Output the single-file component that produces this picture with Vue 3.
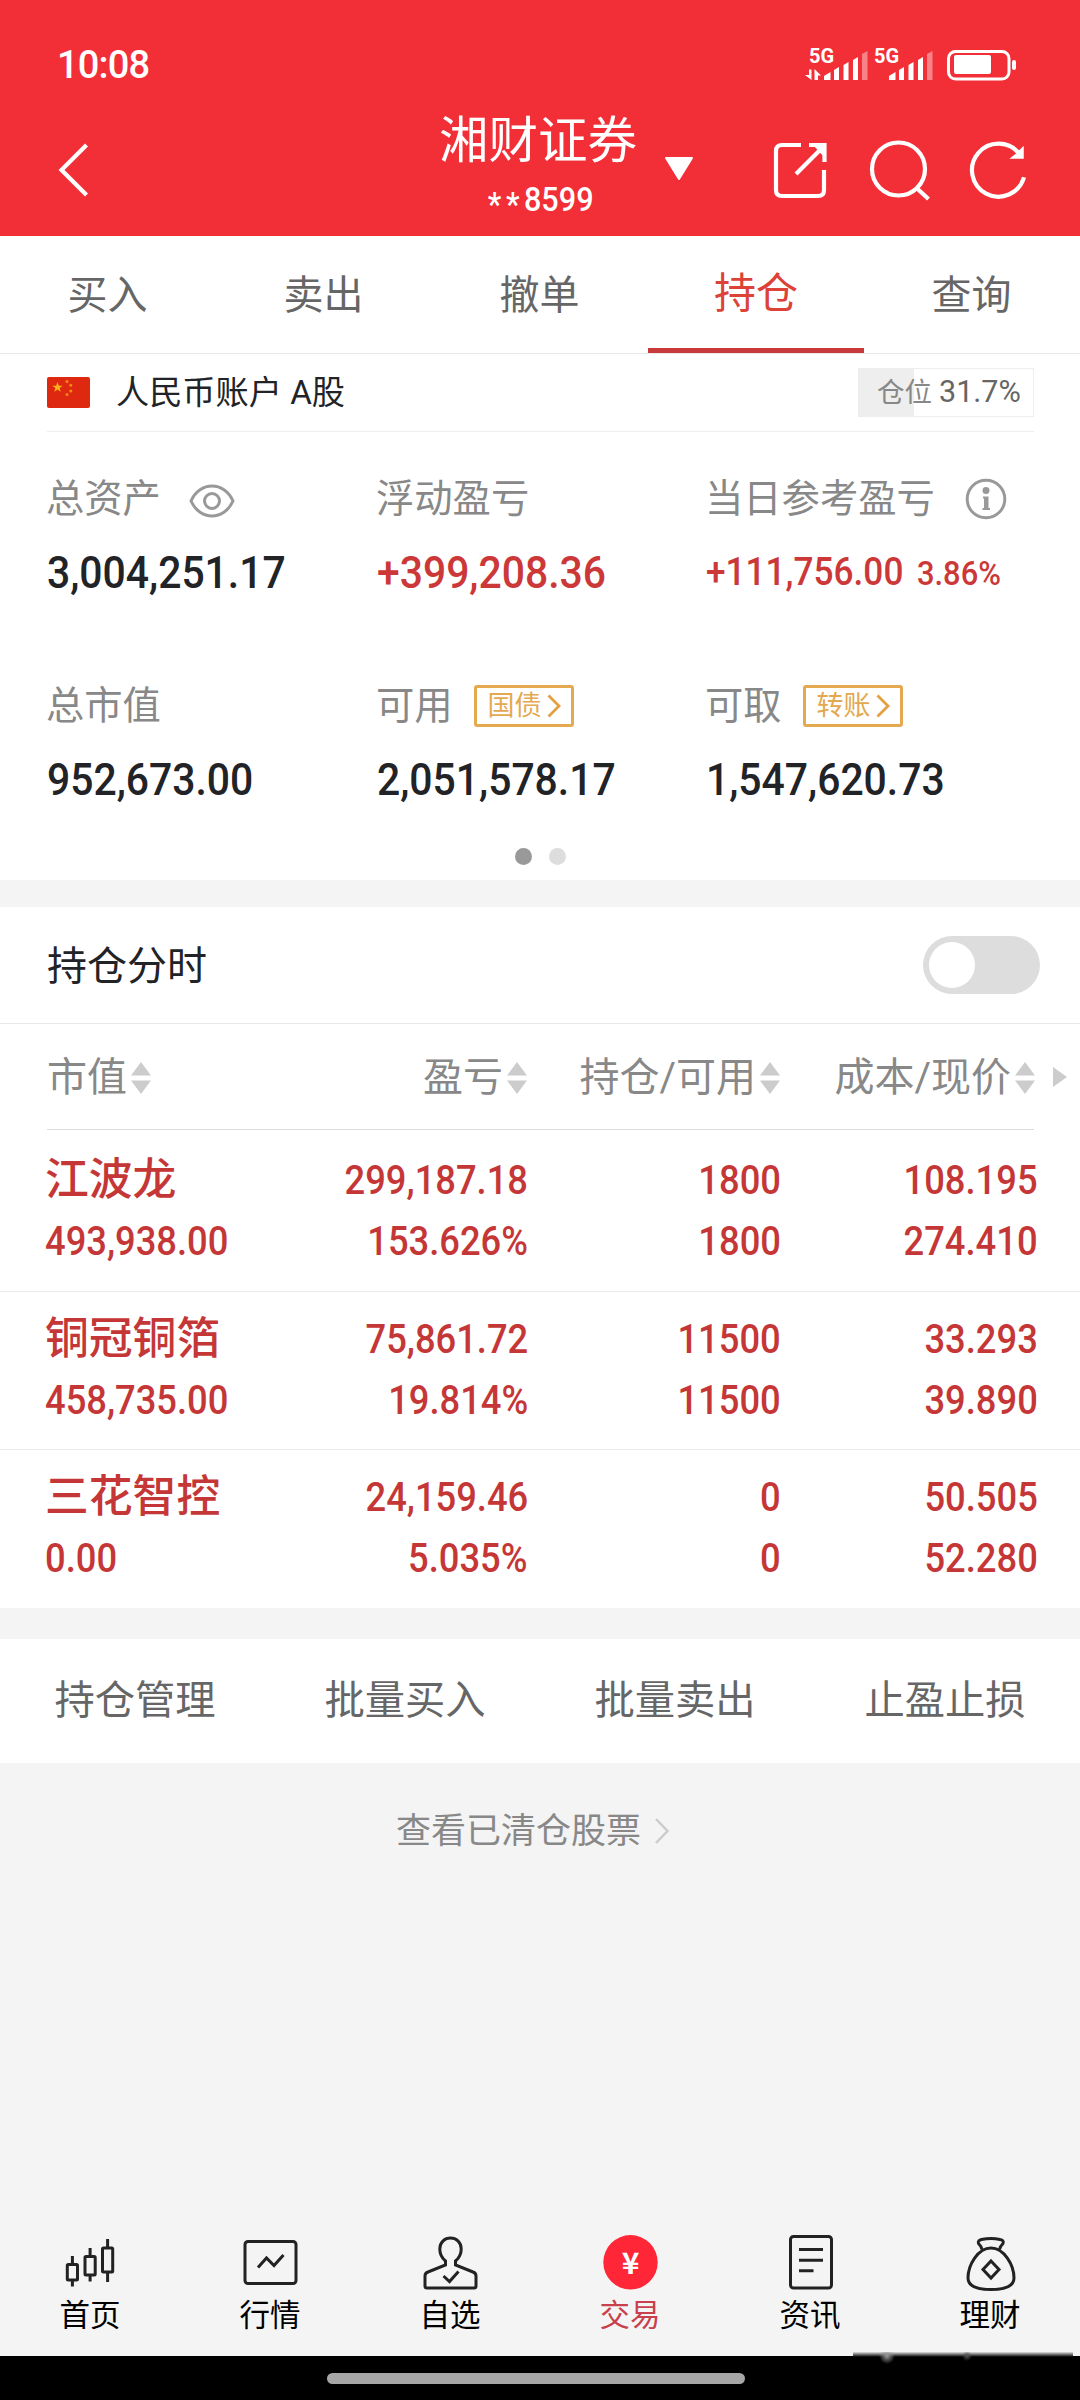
<script setup>
import { ref } from 'vue'

const tabs = ['买入', '卖出', '撤单', '持仓', '查询']
const activeTab = ref('持仓')

const position = 31.7

const stats = [
  { label: '总资产', value: '3,004,251.17', icon: 'eye' },
  { label: '浮动盈亏', value: '+399,208.36', up: true },
  { label: '当日参考盈亏', value: '+111,756.00', rate: '3.86%', up: true, icon: 'info' },
  { label: '总市值', value: '952,673.00' },
  { label: '可用', value: '2,051,578.17', action: '国债' },
  { label: '可取', value: '1,547,620.73', action: '转账' }
]

const columns = ['市值', '盈亏', '持仓/可用', '成本/现价']

const holdings = [
  { name: '江波龙', cells: [['493,938.00'], ['299,187.18', '153.626%'], ['1800', '1800'], ['108.195', '274.410']] },
  { name: '铜冠铜箔', cells: [['458,735.00'], ['75,861.72', '19.814%'], ['11500', '11500'], ['33.293', '39.890']] },
  { name: '三花智控', cells: [['0.00'], ['24,159.46', '5.035%'], ['0', '0'], ['50.505', '52.280']] }
]

const actions = ['持仓管理', '批量买入', '批量卖出', '止盈止损']

const navItems = [
  { key: 'home', label: '首页' },
  { key: 'quote', label: '行情' },
  { key: 'watch', label: '自选' },
  { key: 'trade', label: '交易' },
  { key: 'news', label: '资讯' },
  { key: 'wealth', label: '理财' }
]
const activeNav = ref('trade')
const showTimeline = ref(false)
</script>

<template>
  <div class="page">
    <!-- Header -->
    <header class="header">
      <div class="status">
        <span class="status__time">10:08</span>
        <svg class="status__icons" width="212" height="56" viewBox="804 36 212 56">
          <g fill="#fff">
            <text class="status__net" x="809" y="62">5G</text>
            <text class="status__net" x="874" y="62">5G</text>
            <path d="M811.500 79V68.500h-2.500V74h-4zM814.500 79V68l6.500 6.500h-3V79z" />
            <path d="M824 79v-4l6.500-4v8zM834 79V69l5-3v13zM843.500 79V64l5-3v18zM853 79V59l5-3v23z" />
            <path d="M889 79v-4l6.500-4v8zM899 79V69l5-3v13zM908.500 79V64l5-3v18zM918 79V59l5-3v23z" />
            <path d="M862 79V53l5.500-3v29zM927 79V53l5.500-3v29z" opacity="0.4" />
            <rect x="954" y="54" width="37" height="19" rx="2" />
            <rect x="1012" y="59" width="4" height="10" rx="2" />
          </g>
          <rect x="948.500" y="50.500" width="60.500" height="27.500" rx="7" fill="none" stroke="#fff" stroke-width="3" />
        </svg>
      </div>

      <div class="titlebar">
        <svg class="titlebar__back" width="34" height="56" viewBox="0 0 34 56">
          <path d="M29.500 3 4.500 28l25 25" />
        </svg>
        <div class="titlebar__account">
          <div class="titlebar__name">湘财证券</div>
          <div class="titlebar__no"><span class="titlebar__mask">**</span>8599</div>
        </div>
        <svg class="titlebar__caret" width="30" height="26" viewBox="0 0 30 26">
          <path d="M2 2h26L15 23z" fill="#fff" stroke="#fff" stroke-width="2" stroke-linejoin="round" />
        </svg>
        <div class="titlebar__tools">
          <svg width="60" height="60" viewBox="0 0 60 60">
            <path d="M30 5H11q-6 0-6 6v39q0 6 6 6h36q6 0 6-6V30" />
            <path d="M38 5h15.500v17M53 6 25 34" />
            <path d="M42 5h11v12z" fill="#fff" stroke="none" />
          </svg>
          <svg width="60" height="60" viewBox="0 0 60 60">
            <circle cx="28.500" cy="29" r="26.500" />
            <path d="m46.500 48 12 11" />
          </svg>
          <svg width="60" height="60" viewBox="0 0 60 60">
            <path d="M55 37.300A26.500 26.500 0 1 1 50.500 14" />
            <path d="M54 7.500V18H42.500l5-4z" fill="#fff" stroke-width="1.500" />
          </svg>
        </div>
      </div>
    </header>

    <!-- Tabs -->
    <nav class="tabs">
      <button
        v-for="tab in tabs"
        :key="tab"
        :class="['tabs__item', { 'tabs__item--active': tab === activeTab }]"
        @click="activeTab = tab"
      >
        {{ tab }}
      </button>
    </nav>

    <!-- Account -->
    <section class="account">
      <div class="account__bar">
        <svg width="43" height="31" viewBox="0 0 43 31">
          <rect width="43" height="31" rx="2" fill="#de2910" />
          <path d="m10.500 5 1.300 3.700h3.800l-3 2.300 1.100 3.700-3.200-2.200-3.200 2.200 1.100-3.700-3-2.300h3.800z" fill="#ffb31a" />
          <g fill="#f58a17">
            <circle cx="20" cy="4.500" r="1.500" />
            <circle cx="23.800" cy="8.300" r="1.500" />
            <circle cx="23.800" cy="14" r="1.500" />
            <circle cx="20" cy="17.500" r="1.500" />
          </g>
        </svg>
        <span class="account__name">人民币账户 A股</span>
        <span class="account__position">
          <i class="account__fill" :style="{ width: position + '%' }" />
          <span class="account__position-text">仓位</span>
          <span class="account__position-num">{{ position }}%</span>
        </span>
      </div>

      <div class="stats">
        <div v-for="item in stats" :key="item.label" class="stat">
          <div class="stat__label">
            {{ item.label }}
            <svg v-if="item.icon === 'eye'" class="stat__eye" width="46" height="34" viewBox="0 0 46 34">
              <path d="M2 17C11-3 35-3 44 17 35 37 11 37 2 17z" />
              <circle cx="23" cy="17" r="7.500" />
            </svg>
            <svg v-if="item.icon === 'info'" class="stat__info" width="42" height="42" viewBox="0 0 42 42">
              <circle cx="21" cy="21" r="18.800" />
              <circle cx="21" cy="12.500" r="3.500" class="stat__info-fill" />
              <path d="M18 18.500h5.500V30H25v2h-7.500v-2H19v-9.500h-1z" class="stat__info-fill" />
            </svg>
            <span v-if="item.action" class="stat__action">
              {{ item.action }}
              <svg width="14" height="24" viewBox="0 0 14 24"><path d="m1.500 1.500 10.500 10.500L1.500 22.500" /></svg>
            </span>
          </div>
          <div :class="['stat__value', { 'stat__value--up': item.up, 'stat__value--small': item.rate }]">
            <span class="num">{{ item.value }}</span>
            <span v-if="item.rate" class="num stat__rate">{{ item.rate }}</span>
          </div>
        </div>
      </div>

      <div class="dots">
        <i class="dots__dot dots__dot--active" />
        <i class="dots__dot" />
      </div>
    </section>

    <!-- Holdings -->
    <section class="holdings">
      <div class="holdings__switch">
        <span>持仓分时</span>
        <button :class="['switch', { 'switch--on': showTimeline }]" @click="showTimeline = !showTimeline">
          <i class="switch__knob" />
        </button>
      </div>

      <div class="holdings__head">
        <div v-for="col in columns" :key="col" class="holdings__col">
          {{ col }}
          <svg width="20" height="32" viewBox="0 0 20 32">
            <path d="M10 0l10 13.500H0zM10 32 0 18.500h20z" />
          </svg>
        </div>
        <svg class="holdings__more" width="14" height="20" viewBox="0 0 14 20">
          <path d="M0 0l14 10L0 20z" />
        </svg>
      </div>

      <div v-for="row in holdings" :key="row.name" class="row">
        <div v-for="(cell, i) in row.cells" :key="i" class="row__cell">
          <div v-if="i === 0" class="row__name">{{ row.name }}</div>
          <div v-for="(value, j) in cell" :key="j" class="row__line">
            <span class="num">{{ value }}</span>
          </div>
        </div>
      </div>
    </section>

    <div class="actions">
      <span v-for="action in actions" :key="action">{{ action }}</span>
    </div>

    <div class="cleared">
      查看已清仓股票
      <svg width="14" height="26" viewBox="0 0 14 26"><path d="m1 1 11.500 12L1 25" /></svg>
    </div>

    <!-- Bottom navigation -->
    <nav class="nav">
      <div
        v-for="item in navItems"
        :key="item.key"
        :class="['nav__item', { 'nav__item--active': item.key === activeNav }]"
        @click="activeNav = item.key"
      >
        <svg class="nav__icon" width="60" height="62" viewBox="0 0 60 62">
          <g v-if="item.key === 'home'">
            <rect x="7.300" y="34.500" width="10.200" height="15.500" rx="1" />
            <rect x="25" y="26.500" width="10.200" height="18.500" rx="1" />
            <rect x="42.500" y="18" width="10.200" height="24" rx="1" />
            <path d="M12.400 26v8.500M12.400 50v6.500M30.100 18v8.500M30.100 45v6.500M47.600 9v9M47.600 42v10" />
          </g>
          <g v-else-if="item.key === 'quote'">
            <rect x="5" y="11.500" width="51" height="42" rx="3" />
            <path d="m18 37.500 8.500-9.500 7.500 7.500 9.500-10.500" />
          </g>
          <g v-else-if="item.key === 'watch'">
            <path d="M25.500 35v-4c-3-2.500-5.700-6-5.700-12C19.800 12 25 8 30.500 8S41.200 12 41.200 19c0 6-2.700 9.500-5.700 12v4l17.500 7q3 1 3 4v10q0 2-2 2H7q-2 0-2-2V46q0-3 3-4z" />
            <path d="m23.500 46 6 5.500 9-10" />
          </g>
          <g v-else-if="item.key === 'trade'">
            <circle cx="30.500" cy="32.300" r="27.200" class="nav__coin" />
            <text x="30.500" y="43.500" class="nav__yuan">¥</text>
          </g>
          <g v-else-if="item.key === 'news'">
            <rect x="10.500" y="6.500" width="41" height="51.500" rx="3" />
            <path d="M19 19.500h24M19 30.200h24M19 40.700h14.500" />
          </g>
          <g v-else>
            <path d="M22 19.500c-.5-3-1.500-4-3.500-6-1-2.500 1-3.500 3-4 6-1.300 13-1.300 18.500 0 2.500.5 4 1.500 3 4-2 2-3 3-3.500 6" />
            <path d="M31 18c13 0 23 17 23 30 0 9-9 11.500-23 11.500S8 57 8 48c0-13 10-30 23-30z" />
            <path d="m31 31 8 8.500-8 8.500-8-8.500z" />
          </g>
        </svg>
        <span>{{ item.label }}</span>
      </div>
    </nav>

    <footer class="gesture">
      <i class="gesture__pill" />
      <i class="gesture__smudge" />
    </footer>
  </div>
</template>

<style>
body {
  margin: 0;
  background: #f4f4f4;
}
</style>

<style scoped>
.page {
  display: flex;
  flex-direction: column;
  width: 1080px;
  height: 2400px;
  background: #f4f4f4;
  color: #222326;
  font-family: Roboto, 'Noto Sans CJK SC', sans-serif;
  font-size: 40px;
  line-height: 1;
}

.page * {
  box-sizing: border-box;
}

svg {
  flex: none;
  overflow: visible;
}

button {
  padding: 0;
  border: 0;
  background: none;
  font: inherit;
  color: inherit;
}

/* Narrow figures for every amount */
.num {
  display: inline-block;
  transform: scaleX(0.908);
  transform-origin: left center;
  white-space: nowrap;
  font-weight: 500;
}

.header {
  height: 236px;
  background: #f22f37;
  color: #fff;
}

.status {
  display: flex;
  justify-content: space-between;
  align-items: center;
  height: 92px;
  padding: 38px 64px 0 57px;
}

.status__time {
  font-size: 38px;
  font-weight: 500;
  letter-spacing: -0.8px;
}

.status__net {
  font-family: Roboto, sans-serif;
  font-size: 20px;
  font-weight: 700;
}

.titlebar {
  display: flex;
  align-items: center;
  height: 144px;
}

.titlebar__back {
  margin: 12px 0 0 57px;
}

.titlebar__back,
.titlebar__tools svg {
  fill: none;
  stroke: #fff;
  stroke-width: 4.2;
}

.titlebar__account {
  width: 200px;
  margin-left: 347px;
  padding-top: 4px;
  text-align: center;
}

.titlebar__name {
  font-size: 49.5px;
  line-height: 60px;
  white-space: nowrap;
}

.titlebar__no {
  display: flex;
  justify-content: center;
  margin-top: 10px;
  padding-left: 6px;
  font-size: 34px;
  line-height: 36px;
  font-weight: 500;
  transform: scaleX(0.9);
}

.titlebar__mask {
  padding-top: 5px;
  letter-spacing: 5px;
}

.titlebar__caret {
  margin: 10px 0 0 26px;
}

.titlebar__tools {
  display: flex;
  gap: 39px;
  margin: 12px 0 0 77px;
}

.tabs {
  display: grid;
  grid-template-columns: repeat(5, 1fr);
  height: 118px;
  background: #fff;
  border-bottom: 1px solid #e8e8e8;
}

.tabs__item {
  padding: 7px 1px 0 0;
  border-bottom: 5px solid transparent;
  color: #666;
}

.tabs__item--active {
  padding: 4px 0 0;
  border-bottom-color: #c83a3a;
  color: #dc4237;
  font-size: 42px;
}

.account {
  height: 526px;
  background: #fff;
}

.account__bar {
  display: flex;
  align-items: center;
  height: 78px;
  margin: 0 46px 0 47px;
  border-bottom: 1px solid #eee;
}

.account__name {
  margin-left: 26px;
  font-size: 33.2px;
}

.account__position {
  position: relative;
  display: flex;
  align-items: center;
  width: 176px;
  height: 49px;
  margin-left: auto;
  padding-left: 18px;
  border: 1px solid #eee;
  color: #666;
}

.account__fill {
  position: absolute;
  left: 0;
  top: 0;
  height: 100%;
  background: #eee;
}

.account__position-text {
  position: relative;
  color: #888;
  font-size: 27.5px;
}

.account__position-num {
  position: relative;
  margin-left: 7px;
  font-size: 30.5px;
}

.stats {
  display: grid;
  grid-template-columns: 330px 329px 1fr;
  row-gap: 90px;
  padding: 46px 0 0 46px;
}

.stat__label {
  display: flex;
  align-items: center;
  height: 42px;
  font-size: 38.3px;
  color: #888;
}

.stat__label svg {
  fill: none;
  stroke: #999;
  stroke-width: 3;
}

.stat__eye {
  margin: 3px 0 0 28px;
}

.stat__info {
  margin-left: 30px;
}

.stat__label .stat__info-fill {
  fill: #999;
  stroke: none;
}

.stat__action {
  display: flex;
  align-items: center;
  gap: 5px;
  width: 100px;
  height: 42px;
  margin-left: 21px;
  padding-left: 11px;
  border: 3px solid #e5aa50;
  border-radius: 3px;
  font-size: 27px;
  color: #e3a850;
}

.stat__action svg {
  stroke: #e3a040;
  stroke-width: 2.8;
}

.stat__value {
  display: flex;
  align-items: center;
  height: 46px;
  margin-top: 29px;
  padding-left: 1px;
  font-size: 45px;
}

.stat__value--up {
  color: #cc3838;
}

.stat__value--small {
  font-size: 38.8px;
}

.stat__rate {
  margin-left: -6px;
  padding-top: 2px;
  font-size: 34px;
}

.dots {
  display: flex;
  justify-content: center;
  gap: 17px;
  margin-top: 46px;
}

.dots__dot {
  width: 17px;
  height: 17px;
  border-radius: 50%;
  background: #ddd;
}

.dots__dot--active {
  background: #999;
}

.holdings {
  height: 701px;
  margin-top: 27px;
  background: #fff;
}

.holdings__switch {
  display: flex;
  align-items: center;
  justify-content: space-between;
  height: 117px;
  padding: 0 40px 0 47px;
  border-bottom: 1px solid #e8e8e8;
}

.holdings__switch span {
  padding-top: 3px;
}

.switch {
  display: flex;
  align-items: center;
  width: 117px;
  height: 58px;
  padding-left: 6px;
  border-radius: 29px;
  background: #ddd;
}

.switch--on {
  justify-content: flex-end;
  padding-right: 6px;
  background: #f22f37;
}

.switch__knob {
  width: 46px;
  height: 46px;
  border-radius: 50%;
  background: #fff;
}

.holdings__head,
.row {
  display: grid;
  grid-template-columns: 200px 280px 253px 255px 1fr;
  padding-left: 47px;
}

.holdings__head {
  align-items: center;
  height: 106px;
  color: #888;
  background: linear-gradient(#dcdcdc, #dcdcdc) 47px 100% / 987px 1px no-repeat;
}

.holdings__col {
  display: flex;
  align-items: center;
  justify-content: flex-end;
  gap: 4px;
  padding-top: 1px;
  white-space: nowrap;
}

.holdings__col:first-child {
  justify-content: flex-start;
}

.holdings__head svg {
  fill: #ccc;
}

.holdings__more {
  margin-left: 18px;
}

.row {
  height: 158px;
  padding: 19px 0 0 45px;
  grid-template-columns: 200px 283px 253px 257px 1fr;
  border-bottom: 1px solid #eaeaea;
  color: #c53737;
}

.holdings__head + .row {
  height: 162px;
  padding-top: 22px;
}

.row:last-child {
  border-bottom: 0;
}

.row__name {
  height: 56px;
  font-size: 43.8px;
  font-weight: 500;
  line-height: 57px;
  white-space: nowrap;
}

.row__line {
  height: 61px;
  line-height: 57px;
}

.row__name + .row__line {
  padding-top: 5px;
}

.row__cell:not(:first-child) {
  text-align: right;
}

.row__cell:not(:first-child) .num {
  transform-origin: right center;
}

.actions {
  display: grid;
  grid-template-columns: repeat(4, 1fr);
  align-items: center;
  height: 124px;
  margin-top: 31px;
  background: #fff;
  color: #666;
  font-size: 40.3px;
  text-align: center;
}

.cleared {
  display: flex;
  align-items: center;
  justify-content: center;
  gap: 14px;
  margin-top: 48px;
  padding-right: 15px;
  height: 40px;
  color: #888;
  font-size: 35px;
}

.cleared svg {
  fill: none;
  stroke: #ccc;
  stroke-width: 2.5;
}

.nav {
  display: grid;
  grid-template-columns: repeat(6, 1fr);
  height: 126px;
  margin-top: auto;
}

.nav__item {
  display: flex;
  flex-direction: column;
  align-items: center;
  gap: 9px;
  font-size: 30.5px;
  color: #000;
}

.nav__item--active {
  color: #c8404c;
}

.nav__icon {
  fill: none;
  stroke: #222;
  stroke-width: 3;
}

.nav__coin {
  fill: #ff2638;
  stroke: none;
}

.nav__yuan {
  fill: #fff;
  stroke: none;
  font-family: 'Noto Sans CJK SC', sans-serif;
  font-size: 30px;
  font-weight: 700;
  text-anchor: middle;
}

.gesture {
  position: relative;
  display: flex;
  justify-content: center;
  height: 44px;
  padding: 17px 8px 0 0;
  background: #000;
}

.gesture__pill {
  width: 418px;
  height: 11px;
  border-radius: 6px;
  background: #a6a6a6;
}

/* Soft dark edge that bleeds over the navigation on the right */
.gesture__smudge {
  position: absolute;
  left: 853px;
  top: -4px;
  width: 220px;
  height: 14px;
  background:
    radial-gradient(circle at 34px 4px, #999, transparent 8px),
    radial-gradient(circle at 114px 4px, #555, transparent 5px),
    linear-gradient(#e0e0e0, #000 35%);
}
</style>
